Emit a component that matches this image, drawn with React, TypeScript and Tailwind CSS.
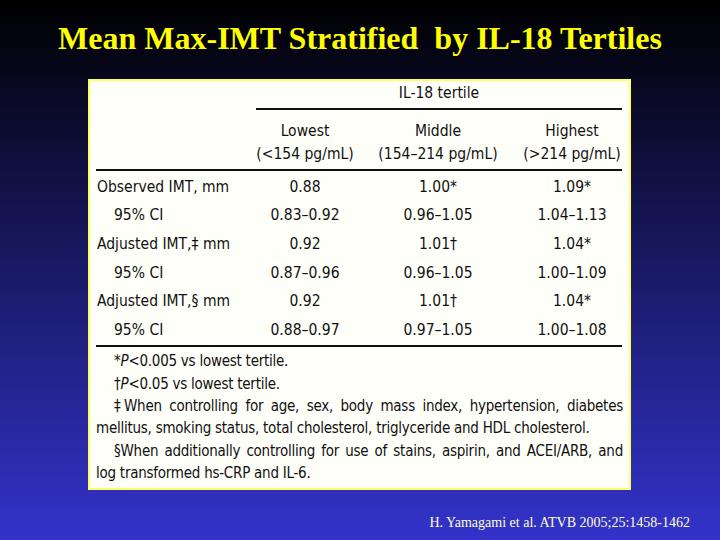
const cell = "flex items-center justify-center whitespace-nowrap";
const cols = "grid-cols-[160px_98px_168px_100px]";
const just = "whitespace-nowrap text-justify [text-align-last:justify]";

const ROWS = [
  { label: "Observed IMT, mm", indent: false, v: ["0.88", "1.00*", "1.09*"] },
  { label: "95% CI", indent: true, v: ["0.83–0.92", "0.96–1.05", "1.04–1.13"] },
  { label: "Adjusted IMT,‡ mm", indent: false, v: ["0.92", "1.01†", "1.04*"] },
  { label: "95% CI", indent: true, v: ["0.87–0.96", "0.96–1.05", "1.00–1.09"] },
  { label: "Adjusted IMT,§ mm", indent: false, v: ["0.92", "1.01†", "1.04*"] },
  { label: "95% CI", indent: true, v: ["0.88–0.97", "0.97–1.05", "1.00–1.08"] },
];

export default function App() {
  return (
    <div className="flex h-[540px] w-[720px] flex-col bg-[linear-gradient(to_bottom,#000000,#3333cc)]">
      {/* Title */}
      <div className="flex h-[79px] items-center justify-center pb-[4px]">
        <h1 className="font-[Times_New_Roman,Liberation_Serif,serif] text-[32px] leading-none font-bold text-[#ffff00]">
          Mean Max-IMT Stratified&nbsp; by IL-18 Tertiles
        </h1>
      </div>

      {/* Table box */}
      <div className="ml-[88px] h-[411px] w-[543px] border-2 border-[#ffff66] bg-[#fffffa] px-[6px] pt-[1px] font-[DejaVu_Sans_Condensed,Liberation_Sans,sans-serif] text-[15.5px] leading-none text-[#111]">
        <div className={`grid ${cols}`}>
          <div className="h-[26px]" />
          <div className={`col-span-3 h-[26px] ${cell} pb-[2px]`}>IL-18 tertile</div>
          <div />
          <div className="col-span-3 h-[2px] bg-[#111]" />

          <div className="h-[59px]" />
          {[
            ["Lowest", "(<154 pg/mL)"],
            ["Middle", "(154–214 pg/mL)"],
            ["Highest", "(>214 pg/mL)"],
          ].map(([a, b]) => (
            <div key={a} className="flex h-[59px] flex-col items-center justify-center gap-[8px] whitespace-nowrap pt-[7px]">
              <span>{a}</span>
              <span>{b}</span>
            </div>
          ))}
          <div className="col-span-4 h-[2px] bg-[#111]" />

          <div className="col-span-4 h-[2px]" />
          {ROWS.map((r, i) => (
            <div key={i} className={`col-span-4 grid h-[28.7px] ${cols}`}>
              <div className={`flex items-center whitespace-nowrap ${r.indent ? "pl-[18px]" : "pl-[1px]"}`}>{r.label}</div>
              {r.v.map((x, j) => (
                <div key={j} className={cell}>
                  {x}
                </div>
              ))}
            </div>
          ))}
          <div className="col-span-4 h-[2px] bg-[#111]" />
        </div>

        {/* Footnotes */}
        <div className="pt-[3px] text-[15px] leading-[22.4px] tracking-[-0.25px]">
          <p className="pl-[18px]">
            *<i>P</i>&lt;0.005 vs lowest tertile.
          </p>
          <p className="pl-[18px]">
            †<i>P</i>&lt;0.05 vs lowest tertile.
          </p>
          <p className={`pl-[18px] ${just}`}>‡When controlling for age, sex, body mass index, hypertension, diabetes</p>
          <p className="whitespace-nowrap">mellitus, smoking status, total cholesterol, triglyceride and HDL cholesterol.</p>
          <p className={`pl-[18px] ${just}`}>§When additionally controlling for use of stains, aspirin, and ACEI/ARB, and</p>
          <p className="whitespace-nowrap">log transformed hs-CRP and IL-6.</p>
        </div>
      </div>

      {/* Citation */}
      <div className="flex flex-1 items-center justify-end pr-[30px] pt-[14px]">
        <span className="font-[Times_New_Roman,Liberation_Serif,serif] text-[14px] text-[#ffffcc]">
          H. Yamagami et al. ATVB 2005;25:1458-1462
        </span>
      </div>
    </div>
  );
}
